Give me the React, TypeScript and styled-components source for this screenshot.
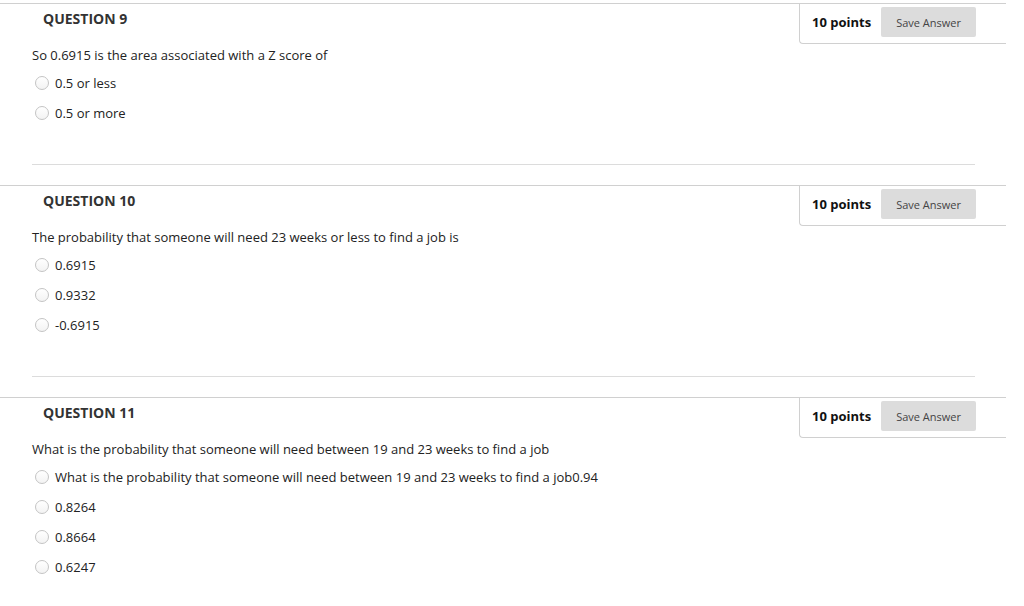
import React from "react";
import styled, { createGlobalStyle } from "styled-components";

interface IQuestion {
  number: number;
  prompt: string;
  options: string[];
}

const questions: IQuestion[] = [
  {
    number: 9,
    prompt: "So 0.6915 is the area associated with a Z score of",
    options: ["0.5 or less", "0.5 or more"],
  },
  {
    number: 10,
    prompt: "The probability that someone will need 23 weeks or less to find a job is",
    options: ["0.6915", "0.9332", "-0.6915"],
  },
  {
    number: 11,
    prompt: "What is the probability that someone will need between 19 and 23 weeks to find a job",
    options: [
      "What is the probability that someone will need between 19 and 23 weeks to find a job0.94",
      "0.8264",
      "0.8664",
      "0.6247",
    ],
  },
];

const Question = ({ number, prompt, options }: IQuestion) => (
  <Block>
    <Header>
      <Title>QUESTION {number}</Title>
      <PointsBox>
        <Points>10 points</Points>
        <SaveButton>Save Answer</SaveButton>
      </PointsBox>
    </Header>
    <Body>
      <Prompt>{prompt}</Prompt>
      <Options>
        {options.map((opt) => (
          <Option key={opt}>
            <Radio />
            <OptionText>{opt}</OptionText>
          </Option>
        ))}
      </Options>
      <Separator />
    </Body>
  </Block>
);

const App = () => (
  <>
    <GlobalStyle />
    <Page>
      {questions.map((q) => (
        <Question key={q.number} {...q} />
      ))}
    </Page>
  </>
);

const GlobalStyle = createGlobalStyle`
  body {
    margin: 0;
    background: #fff;
    font-family: "Open Sans", "Noto Sans", sans-serif;
    color: #222;
    overflow: hidden;
  }
`;

const Page = styled.div`
  width: 1006px;
  padding-top: 3px;
`;

const Block = styled.section`
  border-top: 1px solid #d0d0d0;
  margin-bottom: 20px;
`;

const Header = styled.div`
  display: flex;
  justify-content: space-between;
  align-items: flex-start;
  height: 40px;
`;

const Title = styled.h3`
  margin: 0;
  padding: 5px 0 0 43px;
  font-size: 14px;
  line-height: 20px;
  font-weight: 700;
  color: #333;
`;

const PointsBox = styled.div`
  box-sizing: border-box;
  display: flex;
  align-items: center;
  width: 207px;
  height: 40px;
  padding: 0 30px 3px 12px;
  border-left: 1px solid #d0d0d0;
  border-bottom: 1px solid #d0d0d0;
  border-bottom-left-radius: 4px;
`;

const Points = styled.span`
  font-size: 13px;
  font-weight: 700;
  color: #111;
  margin-right: 10px;
  white-space: nowrap;
`;

const SaveButton = styled.button`
  width: 96px;
  height: 30px;
  border: none;
  border-radius: 2px;
  background: #dcdcdc;
  color: #444;
  font-family: "Open Sans", sans-serif;
  font-size: 11px;
  padding: 0;
`;

const Body = styled.div`
  padding: 0 31px 0 32px;
`;

const Prompt = styled.p`
  margin: 1px 0 0;
  font-size: 13px;
  line-height: 20px;
`;

const Options = styled.div`
  display: flex;
  flex-direction: column;
  gap: 10px;
  margin-top: 8px;
`;

const Option = styled.label`
  display: flex;
  align-items: center;
  height: 20px;
`;

const Radio = styled.span`
  box-sizing: border-box;
  width: 14px;
  height: 14px;
  margin-left: 3px;
  margin-right: 6px;
  border-radius: 50%;
  border: 1px solid #c4c4c4;
  background: linear-gradient(#fff, #f3f3f3);
`;

const OptionText = styled.span`
  font-size: 13px;
  line-height: 20px;
`;

const Separator = styled.hr`
  margin: 41px 0 0;
  border: none;
  border-top: 1px solid #dcdcdc;
`;

export default App;
